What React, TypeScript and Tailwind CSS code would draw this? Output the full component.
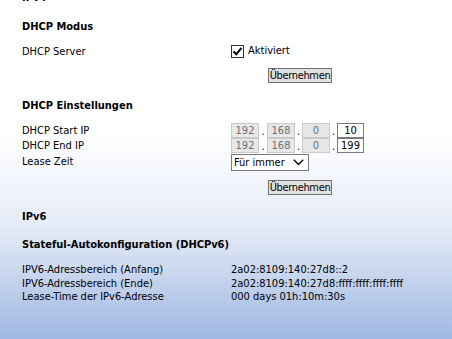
import React from "react";

const font = { fontFamily: '"DejaVu Sans Condensed", "DejaVu Sans", sans-serif' };

function IpInput({ value, enabled }: { value: string; enabled?: boolean }) {
  return (
    <div
      className={
        enabled
          ? "w-[27px] h-[15px] border border-[#7a7a7a] bg-white text-black text-center leading-[13px]"
          : "w-[28px] h-[15px] border border-[#c9c9c9] bg-[#e7e7e7] text-[#707070] text-center leading-[13px]"
      }
    >
      {value}
    </div>
  );
}

function IpRow({ last }: { last: string }) {
  return (
    <div className="flex items-end h-[15px]">
      <IpInput value="192" />
      <span className="w-[8px] text-center leading-[13px]">.</span>
      <IpInput value="168" />
      <span className="w-[7px] text-center leading-[13px]">.</span>
      <IpInput value="0" />
      <span className="w-[7px] text-center leading-[13px]">.</span>
      <IpInput value={last} enabled />
    </div>
  );
}

function Button() {
  return (
    <div className="h-[15px] w-[64px] border border-[#707070] bg-[#e1e1e1] text-black text-center leading-[13px] tracking-[-0.35px] whitespace-nowrap overflow-hidden ml-[37px]">
      Übernehmen
    </div>
  );
}

export default function App() {
  return (
    <div
      style={font}
      className="w-[452px] h-[339px] overflow-hidden text-[11px] text-black bg-[linear-gradient(to_bottom,#ffffff_0px,#ffffff_135px,#e4ebf7_228px,#a0b8e2_339px)]"
    >
      <div className="pl-[22px] pt-0">
        <div className="font-bold leading-[14px] mt-[-9px]">IPv4</div>

        <div className="font-bold leading-[14px] mt-[15px]">DHCP Modus</div>

        <div className="grid grid-cols-[209px_1fr] mt-[9px]">
          <div className="leading-[14px] pt-[2px]">DHCP Server</div>
          <div className="flex items-center gap-[4px]">
            <div className="w-[13px] h-[13px] border border-[#333] bg-white flex items-center justify-center">
              <svg width="11" height="11" viewBox="0 0 11 11">
                <path d="M1.5 5.5 L4.2 8.3 L9.5 1.8" fill="none" stroke="#000" strokeWidth="2" />
              </svg>
            </div>
            <span className="leading-[14px]">Aktiviert</span>
          </div>
        </div>

        <div className="grid grid-cols-[209px_1fr] mt-[9px]">
          <div />
          <Button />
        </div>

        <div className="font-bold leading-[14px] mt-[16px]">DHCP Einstellungen</div>

        <div className="grid grid-cols-[209px_1fr] mt-[10px]">
          <div className="leading-[15px]">DHCP Start IP</div>
          <IpRow last="10" />
          <div className="leading-[15px]">DHCP End IP</div>
          <IpRow last="199" />
          <div className="leading-[17px]">Lease Zeit</div>
          <div className="mt-[1px]">
            <div className="w-[78px] h-[17px] border border-[#7a7a7a] bg-white flex items-center justify-between pl-[2px] pr-[4px]">
              <span className="leading-[15px]">Für immer</span>
              <svg width="11" height="7" viewBox="0 0 11 7">
                <path d="M0.8 0.8 L5.5 5.5 L10.2 0.8" fill="none" stroke="#000" strokeWidth="1.4" />
              </svg>
            </div>
          </div>
        </div>

        <div className="grid grid-cols-[209px_1fr] mt-[9px]">
          <div />
          <Button />
        </div>

        <div className="font-bold leading-[14px] mt-[15px]">IPv6</div>

        <div className="font-bold leading-[14px] mt-[14px]">Stateful-Autokonfiguration (DHCPv6)</div>

        <div className="grid grid-cols-[209px_1fr] mt-[11px] leading-[13.5px]">
          <div>IPV6-Adressbereich (Anfang)</div>
          <div>2a02:8109:140:27d8::2</div>
          <div>IPV6-Adressbereich (Ende)</div>
          <div>2a02:8109:140:27d8:ffff:ffff:ffff:ffff</div>
          <div>Lease-Time der IPv6-Adresse</div>
          <div>000 days 01h:10m:30s</div>
        </div>
      </div>
    </div>
  );
}
